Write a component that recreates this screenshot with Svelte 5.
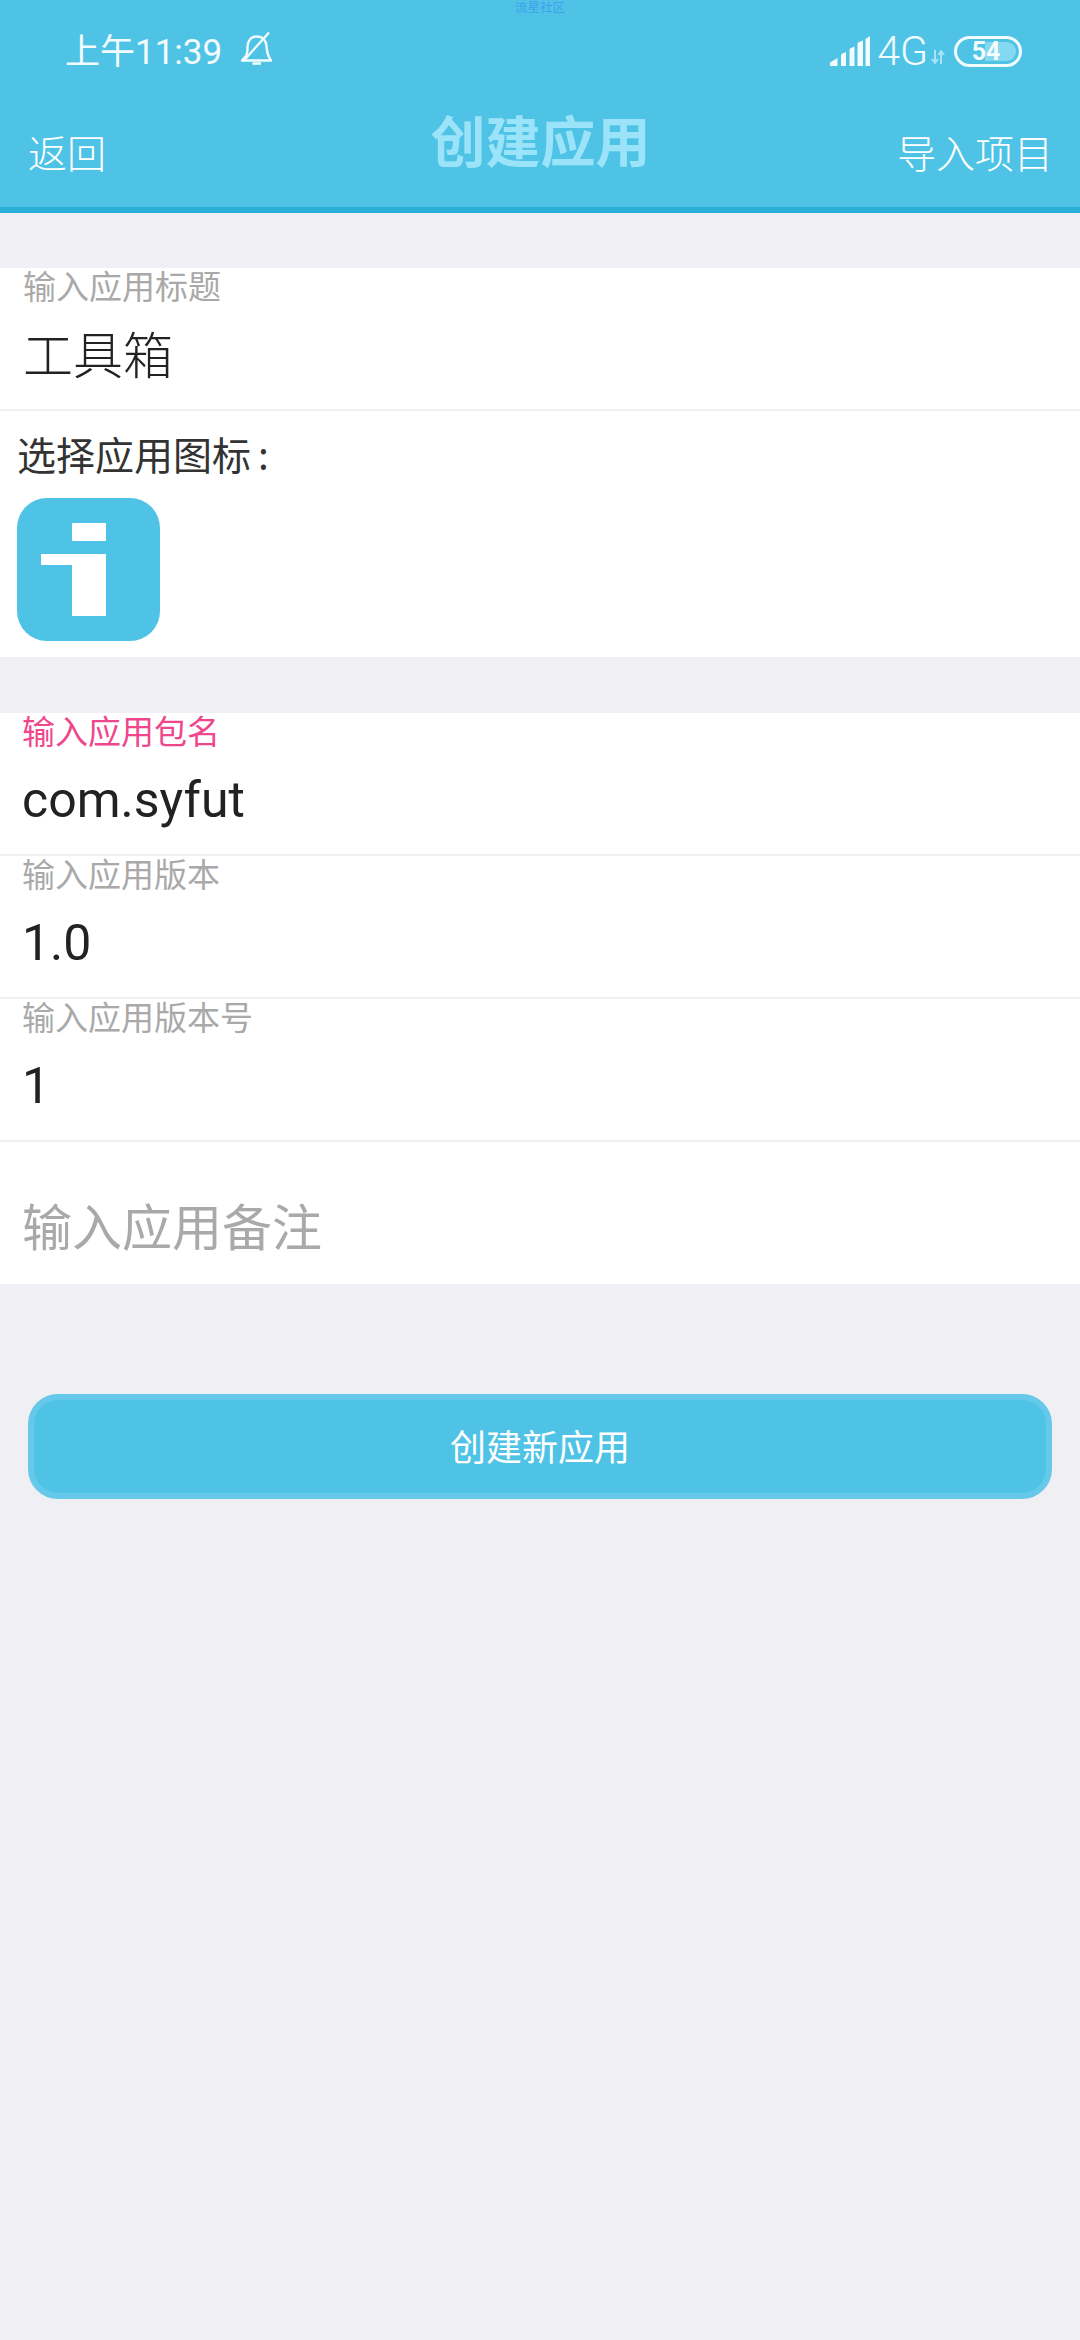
<script>
  const topFields = [{ label: "输入应用标题", value: "工具箱" }];
  const fields = [
    { label: "输入应用包名", value: "com.syfut", focus: true },
    { label: "输入应用版本", value: "1.0" },
    { label: "输入应用版本号", value: "1" },
  ];
</script>

<div class="page">
  <header class="head">
    <span class="mark">流星社区</span>
    <div class="status">
      <div class="status-left">
        <span class="time">上午11:39</span>
        <svg class="bell" width="34" height="34" viewBox="0 0 34 34" fill="none" stroke="#f0fbfe" stroke-width="2.4">
          <path d="M2 29.500 5.500 25.500C7.500 23 7.500 20.500 7.500 17 7.500 10 11 5.500 17 5.500 22.500 5.500 26 9.500 26.500 15 26.800 20 27 24 31 29.500Z" stroke-linejoin="round"/>
          <path d="M3 30.500 29 1.500"/>
          <path d="M12.500 32.500H21" stroke-width="2.600"/>
        </svg>
      </div>
      <div class="status-right">
        <svg width="40" height="30" viewBox="0 0 40 30" fill="#f2fcff">
          <path d="M0 30V26.500L7.500 22V30Z"/>
          <path d="M11 30V19.500Q11 18 12.500 17.500L16 16V30Z"/>
          <path d="M19.500 30V14Q19.500 12.500 21 12L24.500 10.500V30Z"/>
          <path d="M27.500 30V8Q27.500 6.500 29 6L33 4.500V30Z"/>
          <path d="M35.500 30V3L40 0V30Z"/>
        </svg>
        <span class="net">4G</span>
        <svg class="arrows" width="14" height="14" viewBox="0 0 14 14" fill="none" stroke="#a8e4f6" stroke-width="2">
          <path d="M4 0V12M1 9 4 13 7 9"/>
          <path d="M10 14V2M7.500 5 10 1 13 5"/>
        </svg>
        <div class="battery">
          <div class="charge"></div>
          <span>54</span>
        </div>
      </div>
    </div>
    <nav class="nav">
      <span class="nav-link">返回</span>
      <span class="nav-title">创建应用</span>
      <span class="nav-link end">导入项目</span>
    </nav>
  </header>

  <section class="card">
    {#each topFields as f}
      <div class="field tool">
        <span class="label">{f.label}</span>
        <span class="value">{f.value}</span>
      </div>
    {/each}
    <div class="picker">
      <div class="picker-title">选择应用图标<span class="colon">:</span></div>
      <div class="app-icon">
        <svg width="143" height="143" viewBox="0 0 143 143" fill="#fff">
          <rect x="55" y="25" width="34" height="18"/>
          <path d="M24 56H89V118H55V67H24Z"/>
        </svg>
      </div>
    </div>
  </section>

  <section class="card second">
    {#each fields as f}
      <div class="field">
        <span class="label" class:focus={f.focus}>{f.label}</span>
        <span class="value">{f.value}</span>
      </div>
    {/each}
    <div class="field last">
      <span class="note">输入应用备注</span>
    </div>
  </section>

  <div class="action">
    <button class="create">创建新应用</button>
  </div>
</div>

<style>
  :global(body) {
    margin: 0;
    background: #efeff4;
  }

  .page {
    background: #efeff4;
    font-family: "Noto Sans CJK SC", "Noto Sans", sans-serif;
  }

  .head {
    position: relative;
    height: 207px;
    background: #4fc3e6;
    border-bottom: 6px solid #2bafd6;
    color: #fff;
  }

  .mark {
    position: absolute;
    top: 0;
    left: 515px;
    font-size: 12.500px;
    line-height: 13px;
    color: #3f9ff0;
  }

  .status {
    display: flex;
    justify-content: space-between;
    align-items: center;
    height: 102px;
    padding: 0 58px 0 65px;
  }

  .status-left,
  .status-right {
    display: flex;
    align-items: center;
  }

  .time {
    margin-top: 3px;
    font-family: "Roboto", "Noto Sans CJK SC", sans-serif;
    font-size: 35px;
    font-weight: 400;
    line-height: 50px;
    color: #f2fcff;
  }

  .bell {
    margin: -6px 0 0 18px;
  }

  .net {
    margin-left: 7px;
    font-family: "Roboto", sans-serif;
    font-size: 41px;
    font-weight: 300;
    line-height: 50px;
    color: #f2fcff;
  }

  .arrows {
    margin: 12px 9px 0 3px;
  }

  .battery {
    position: relative;
    width: 68px;
    height: 31px;
    box-sizing: border-box;
    border: 3px solid #f2fcff;
    border-radius: 16px;
    display: flex;
    align-items: center;
    justify-content: center;
  }

  .charge {
    position: absolute;
    left: 3px;
    top: 3px;
    bottom: 3px;
    width: 56px;
    border-radius: 10px;
    background: linear-gradient(90deg, #4fc3e6 45%, #84d8ef 45%);
  }

  .battery span {
    position: relative;
    left: -2px;
    font-family: "Roboto", sans-serif;
    font-size: 25px;
    font-weight: 700;
    line-height: 25px;
    color: #f2fcff;
  }

  .nav {
    display: grid;
    grid-template-columns: 1fr auto 1fr;
    padding: 0 27px 0 28px;
  }

  .nav-link {
    padding-top: 23px;
    font-size: 39px;
    font-weight: 300;
    line-height: 52px;
  }

  .end {
    text-align: right;
  }

  .nav-title {
    margin-top: 1px;
    font-size: 55px;
    font-weight: 700;
    line-height: 70px;
    color: #9be3f9;
  }

  .card {
    margin-top: 55px;
    background: #fff;
  }

  .second {
    margin-top: 56px;
  }

  .field {
    display: flex;
    flex-direction: column;
    height: 143px;
    box-sizing: border-box;
    padding-left: 22px;
    border-bottom: 2px solid #efeff4;
  }

  .tool {
    padding-left: 23px;
  }

  .last {
    height: 142px;
    border-bottom: 0;
    justify-content: flex-end;
  }

  .label {
    margin-top: -2px;
    font-size: 33px;
    line-height: 38px;
    color: #a9a9a9;
  }

  .focus {
    color: #f0468c;
  }

  .value {
    margin-top: 16px;
    font-family: "Roboto", "Noto Sans CJK SC", sans-serif;
    font-size: 50px;
    line-height: 70px;
    color: #222;
  }

  .tool .value {
    margin-top: 13px;
    font-family: "Noto Sans CJK SC", sans-serif;
    font-size: 50px;
    font-weight: 300;
  }

  .note {
    margin-bottom: 25px;
    font-size: 50px;
    line-height: 70px;
    font-weight: 400;
    color: #a9a9a9;
  }

  .picker {
    height: 246px;
    box-sizing: border-box;
    padding: 17px 0 0 17px;
  }

  .picker-title {
    font-size: 39px;
    line-height: 50px;
    color: #333;
  }

  .colon {
    margin-left: 7px;
  }

  .app-icon {
    width: 143px;
    height: 143px;
    margin-top: 20px;
    border-radius: 30px;
    background: #4fc3e6;
  }

  .app-icon svg {
    display: block;
  }

  .action {
    padding: 110px 28px 0;
  }

  .create {
    display: block;
    width: 100%;
    height: 105px;
    padding: 0 0 3px;
    border: 6px solid #67c9e9;
    border-radius: 30px;
    background: #4fc3e6;
    color: #fff;
    font-family: inherit;
    font-size: 36px;
    font-weight: 400;
  }
</style>
